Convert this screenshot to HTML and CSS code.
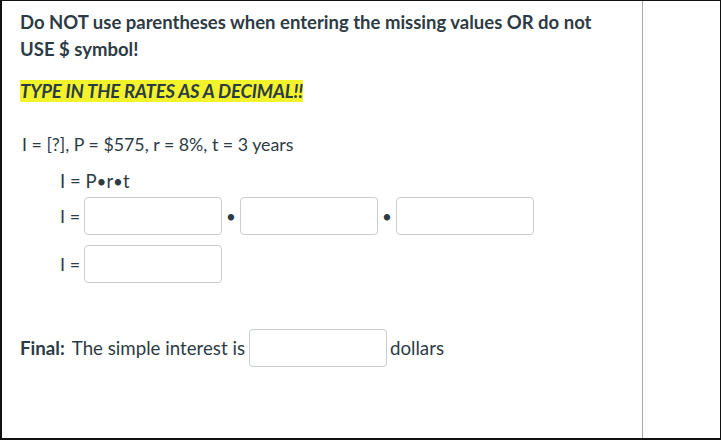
FILE: index.html
```html
<!DOCTYPE html>
<html>
<head>
<meta charset="utf-8">
<link rel="stylesheet" href="styles.css">
</head>
<body>
<div class="frame">
  <div class="main">
    <p class="warn">Do NOT use parentheses when entering the missing values OR do not USE $ symbol!</p>
    <p class="hl-line"><span class="hl">TYPE IN THE RATES AS A DECIMAL!!</span></p>
    <p class="given">I = [?], P = $575, r = 8%, t = 3 years</p>
    <div class="work">
      <div class="formula">I = P<span class="dot">•</span>r<span class="dot">•</span>t</div>
      <div class="row">
        <span class="lbl">I =</span>
        <input class="box" type="text">
        <span class="mul">•</span>
        <input class="box" type="text">
        <span class="mul">•</span>
        <input class="box" type="text">
      </div>
      <div class="row">
        <span class="lbl">I =</span>
        <input class="box" type="text">
      </div>
    </div>
    <div class="final">
      <b class="final-lbl">Final:</b>
      <span>The simple interest is</span>
      <input class="box" type="text">
      <span>dollars</span>
    </div>
  </div>
  <div class="side"></div>
</div>
</body>
</html>
```

FILE: styles.css
```css
html, body {
  margin: 0;
  padding: 0;
  background: #fff;
}
.frame {
  box-sizing: border-box;
  width: 721px;
  height: 440px;
  border: 2px solid #111;
  border-top-width: 1px;
  border-right-width: 1px;
  display: flex;
  font-family: Lato, "Liberation Sans", sans-serif;
  color: #2d3b45;
}
.main {
  width: 641px;
  border-right: 1px solid #a9a9a9;
  padding: 8px 0 0 18px;
  box-sizing: border-box;
}
.side {
  flex: 1;
}
.warn {
  margin: 0;
  font-weight: 700;
  font-size: 18.5px;
  line-height: 27px;
  width: 600px;
}
.hl-line {
  margin: 17px 0 0 0;
  font-size: 18.5px;
  line-height: 23px;
  font-weight: 700;
  font-style: italic;
}
.hl {
  background: #f3f32c;
  letter-spacing: -0.15px;
}
.given {
  margin: 29px 0 0 2px;
  font-size: 17.8px;
  line-height: 24px;
}
.work {
  margin: 15px 0 0 40px;
  display: flex;
  flex-direction: column;
  gap: 10px;
}
.formula {
  font-size: 18.5px;
  line-height: 20px;
  margin-bottom: -5px;
}
.dot {
  font-size: 17px;
}
.row {
  display: flex;
  align-items: center;
}
.lbl {
  font-size: 18px;
  width: 24px;
}
.box {
  box-sizing: border-box;
  width: 138px;
  height: 38px;
  border: 1px solid #c7cdd1;
  border-radius: 4px;
  background: #fff;
  margin: 0;
  padding: 0;
}
.mul {
  width: 18px;
  text-align: center;
  font-size: 17px;
}
.final {
  margin: 46px 0 0 0;
  display: flex;
  align-items: center;
  font-size: 18.7px;
}
.final-lbl {
  margin-right: 7px;
}
.final .box {
  margin: 0 3px 0 4px;
}
```
